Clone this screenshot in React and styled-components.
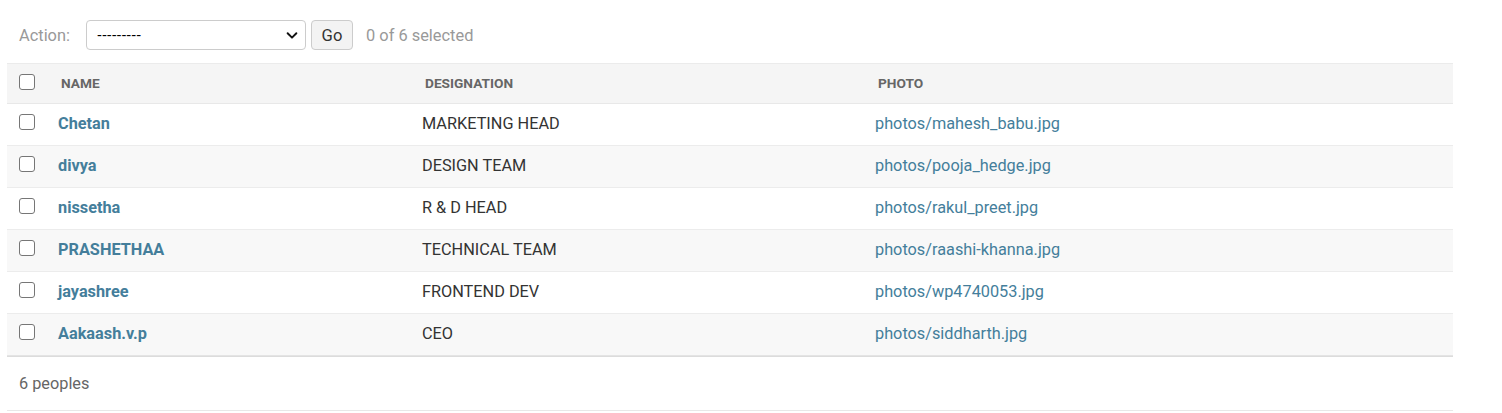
import React from "react";
import styled, { createGlobalStyle } from "styled-components";

const Global = createGlobalStyle`
  html, body { margin: 0; padding: 0; background: #fff; }
  body { font-family: Roboto, "Liberation Sans", Arial, sans-serif; color: #333; }
  * { box-sizing: border-box; }
`;

const Page = styled.div`
  width: 1453px;
  padding-left: 7px;
`;

const Actions = styled.div`
  height: 63px;
  padding: 7px 12px 0;
  display: flex;
  align-items: center;
  font-size: 16.4px;
  color: #999;
`;

const Label = styled.span`
  margin-right: 16px;
`;

const SelectBox = styled.div`
  width: 220px;
  height: 30px;
  border: 1px solid #ccc;
  border-radius: 4px;
  background: #fff;
  display: flex;
  align-items: center;
  justify-content: space-between;
  padding: 0 6px 0 10px;
  font-family: "Liberation Sans", Arial, sans-serif;
  font-size: 14.7px;
  color: #000;
`;

const GoButton = styled.button`
  margin-left: 5px;
  width: 42px;
  height: 30px;
  border: 1px solid #ccc;
  border-radius: 4px;
  background: #f3f3f3;
  font-family: inherit;
  font-size: 16.6px;
  color: #333;
  padding: 0;
`;

const Counter = styled.span`
  margin-left: 13px;
`;

const Grid = styled.div`
  display: grid;
  grid-template-columns: 39px 364px 453px 590px;
`;

const HeadRow = styled(Grid)`
  height: 41px;
  background: #f5f5f5;
  border-top: 1px solid #ebebeb;
  border-bottom: 1px solid #e8e8e8;
`;

const Row = styled(Grid)`
  height: 42px;
  background: ${(p) => (p.$alt ? "#f8f8f8" : "#fff")};
  border-bottom: 1px solid ${(p) => (p.$last ? "#e4e4e4" : "#ececec")};
`;

const HeadCell = styled.div`
  display: flex;
  align-items: ${(p) => (p.$box ? "flex-start" : "center")};
  padding-left: ${(p) => (p.$box ? "12px" : "15px")};
  padding-top: ${(p) => (p.$box ? "10px" : "0")};
  padding-bottom: 2px;
  font-size: 13.7px;
  font-weight: 700;
  text-transform: uppercase;
  color: #666;
`;

const Cell = styled.div`
  display: flex;
  align-items: ${(p) => (p.$box ? "flex-start" : "center")};
  padding-left: 12px;
  padding-top: ${(p) => (p.$box ? "10px" : "0")};
  padding-bottom: 3px;
  font-size: 16.3px;
  color: ${(p) => (p.$link ? "#447e9b" : "#333")};
  font-weight: ${(p) => (p.$bold ? 700 : 400)};
  white-space: nowrap;
`;

const Check = styled.span`
  display: inline-block;
  width: 16px;
  height: 16px;
  border: 1px solid #767676;
  border-radius: 3px;
  background: #fff;
`;

const Paginator = styled.div`
  height: 55px;
  border-top: 1px solid #dcdcdc;
  border-bottom: 1px solid #e8e8e8;
  display: flex;
  align-items: center;
  padding-left: 12px;
  font-size: 16.3px;
  color: #666;
`;

const people = [
  ["Chetan", "MARKETING HEAD", "photos/mahesh_babu.jpg"],
  ["divya", "DESIGN TEAM", "photos/pooja_hedge.jpg"],
  ["nissetha", "R & D HEAD", "photos/rakul_preet.jpg"],
  ["PRASHETHAA", "TECHNICAL TEAM", "photos/raashi-khanna.jpg"],
  ["jayashree", "FRONTEND DEV", "photos/wp4740053.jpg"],
  ["Aakaash.v.p", "CEO", "photos/siddharth.jpg"],
];

const Chevron = () => (
  <svg width="14" height="14" viewBox="0 0 16 16">
    <path d="M3 6l5 5 5-5" fill="none" stroke="#111" strokeWidth="2.2" strokeLinecap="round" strokeLinejoin="round" />
  </svg>
);

export default function App() {
  return (
    <Page>
      <Global />
      <Actions>
        <Label>Action:</Label>
        <SelectBox>
          <span>---------</span>
          <Chevron />
        </SelectBox>
        <GoButton>Go</GoButton>
        <Counter>0 of 6 selected</Counter>
      </Actions>
      <HeadRow>
        <HeadCell $box>
          <Check />
        </HeadCell>
        <HeadCell>Name</HeadCell>
        <HeadCell>Designation</HeadCell>
        <HeadCell>Photo</HeadCell>
      </HeadRow>
      {people.map(([n, d, p], i) => (
        <Row key={n} $alt={i % 2 === 1} $last={i === people.length - 1}>
          <Cell $box>
            <Check />
          </Cell>
          <Cell $link $bold>{n}</Cell>
          <Cell>{d}</Cell>
          <Cell $link>{p}</Cell>
        </Row>
      ))}
      <Paginator>6 peoples</Paginator>
    </Page>
  );
}
